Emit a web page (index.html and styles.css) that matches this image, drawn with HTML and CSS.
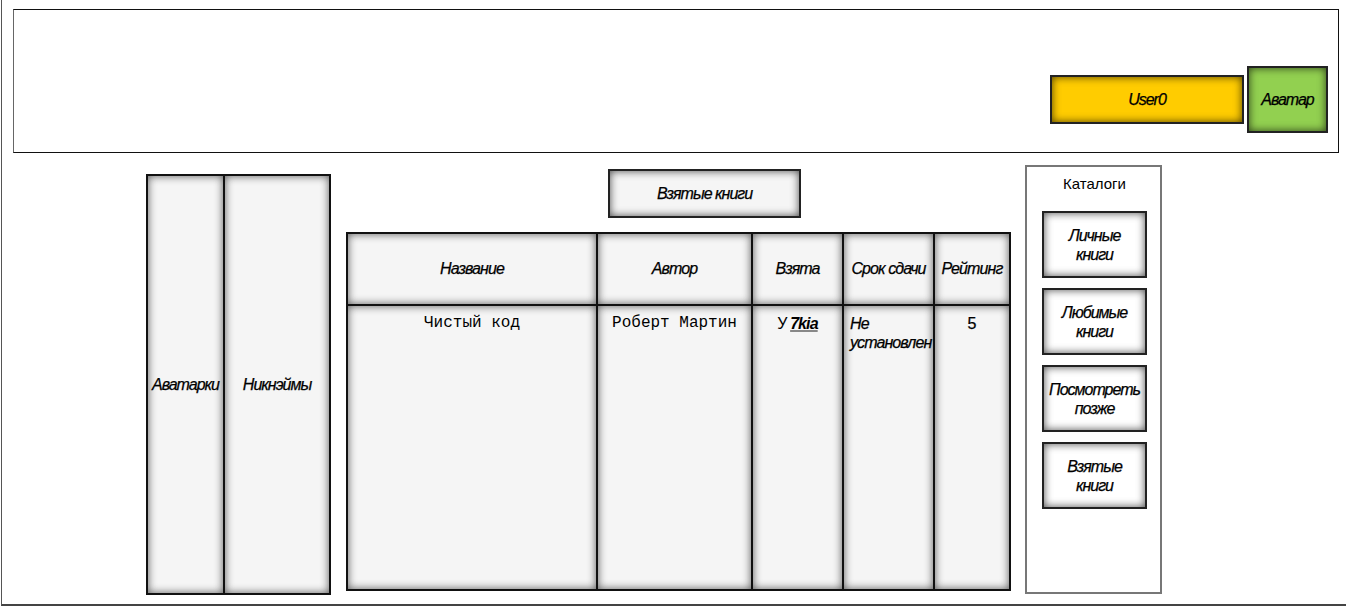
FILE: index.html
```html
<!DOCTYPE html>
<html lang="ru">
<head>
    <meta charset="UTF-8">
    <meta name="viewport" content="width=device-width, initial-scale=1.0">
    <title>Взятые книги</title>
    <link rel="stylesheet" href="styles.css">
</head>
<body>
    <div class="page">
        <div class="header">
            <div class="user-bar">
                <div class="btn user-name">User0</div>
                <div class="btn avatar">Аватар</div>
            </div>
        </div>
        <div class="main">
            <div class="users">
                <div class="cell users-avatars">Аватарки</div>
                <div class="cell users-nicks">Никнэймы</div>
            </div>
            <div class="content">
                <div class="btn title-btn">Взятые книги</div>
                <div class="books">
                    <div class="cell head">Название</div>
                    <div class="cell head">Автор</div>
                    <div class="cell head">Взята</div>
                    <div class="cell head">Срок сдачи</div>
                    <div class="cell head">Рейтинг</div>
                    <div class="cell body mono">Чистый код</div>
                    <div class="cell body mono">Роберт Мартин</div>
                    <div class="cell body taken">У <a href="#">7kia</a></div>
                    <div class="cell body due">Не установлен</div>
                    <div class="cell body rating">5</div>
                </div>
            </div>
            <div class="catalogs">
                <div class="catalogs-title">Каталоги</div>
                <div class="btn cat-btn">Личные<br>книги</div>
                <div class="btn cat-btn">Любимые<br>книги</div>
                <div class="btn cat-btn">Посмотреть<br>позже</div>
                <div class="btn cat-btn">Взятые<br>книги</div>
            </div>
        </div>
    </div>
</body>
</html>
```

FILE: styles.css
```css
* {
    box-sizing: border-box;
}
body {
    margin: 0;
    font-family: "Liberation Sans", Arial, sans-serif;
    background: #fff;
    color: #000;
}
.page {
    width: 1346px;
    height: 606px;
    margin-left: 1px;
    border-left: 1px solid #555;
    border-bottom: 2px solid #444;
    overflow: hidden;
}
.header {
    margin: 9px 8px 0 11px;
    height: 144px;
    border: 1px solid #111;
    border-left-color: #666;
    padding: 56px 10px 0 0;
}
.user-bar {
    display: flex;
    justify-content: flex-end;
    align-items: center;
    gap: 3px;
    height: 67px;
}
.btn {
    display: flex;
    align-items: center;
    justify-content: center;
    text-align: center;
    font-style: italic;
    font-size: 16px;
    letter-spacing: -1px;
    line-height: 19px;
    -webkit-text-stroke: 0.25px #000;
    border: 2px solid #222;
    background: #fff;
    box-shadow: inset 0 0 9px rgba(0, 0, 0, 0.7);
}
.user-name {
    width: 194px;
    height: 49px;
    background: #ffcc00;
}
.avatar {
    width: 81px;
    height: 67px;
    background: #92d050;
}
.main {
    display: flex;
    align-items: flex-start;
    padding-left: 144px;
}
.cell {
    border: 1px solid #111;
    background: #f5f5f5;
    box-shadow: inset 0 0 8px rgba(0, 0, 0, 0.65);
    font-style: italic;
    font-size: 16px;
    letter-spacing: -0.9px;
    -webkit-text-stroke: 0.25px #000;
}
.users {
    display: flex;
    margin-top: 21px;
    height: 421px;
    border: 1px solid #111;
}
.users .cell {
    display: flex;
    align-items: center;
    justify-content: center;
    letter-spacing: -1px;
}
.users-avatars {
    width: 77px;
}
.users-nicks {
    width: 106px;
}
.content {
    margin: 16px 0 0 15px;
}
.title-btn {
    width: 193px;
    height: 49px;
    margin-left: 262px;
    background: #f5f5f5;
}
.books {
    display: grid;
    grid-template-columns: 250px 155px 91px 91px 76px;
    grid-template-rows: 72px 285px;
    margin-top: 14px;
    border: 1px solid #111;
}
.head {
    display: flex;
    align-items: center;
    justify-content: center;
}
.body {
    text-align: center;
    padding-top: 8px;
    line-height: 19px;
}
.mono {
    font-family: "Liberation Mono", "Courier New", monospace;
    font-style: normal;
    font-size: 16px;
    letter-spacing: 0;
    -webkit-text-stroke: 0;
}
.taken {
    font-style: normal;
    -webkit-text-stroke: 0;
}
.taken a {
    color: #000;
    font-style: italic;
    font-weight: bold;
    text-decoration: underline;
    text-decoration-color: #888;
    text-decoration-thickness: 2px;
}
.due {
    text-align: left;
    padding-left: 6px;
}
.rating {
    font-style: normal;
    letter-spacing: 0;
}
.catalogs {
    width: 137px;
    height: 429px;
    margin: 12px 0 0 14px;
    border: 2px solid #777;
    padding: 8px 13px 0 15px;
}
.catalogs-title {
    text-align: center;
    font-size: 15px;
    line-height: 18px;
    margin-bottom: 18px;
}
.cat-btn {
    width: 105px;
    height: 67px;
    margin-bottom: 10px;
}
```
